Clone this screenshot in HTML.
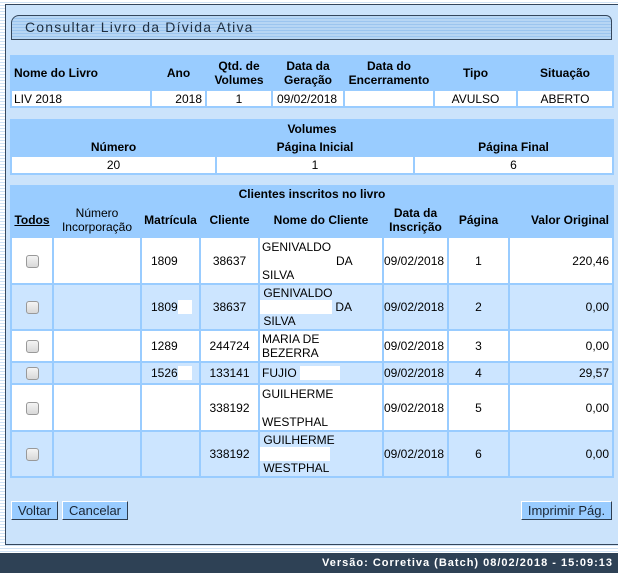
<!DOCTYPE html>
<html><head><meta charset="utf-8"><style>
*{margin:0;padding:0;box-sizing:border-box}
body{width:618px;height:573px;overflow:hidden;position:relative;font-family:"Liberation Sans",Arial,sans-serif;font-size:12px;color:#000;
background:repeating-linear-gradient(to bottom,#fff 0,#fff 2px,#cfe2f5 2px,#cfe2f5 3px)}
#panel{position:absolute;left:5px;top:4px;width:613px;height:541px;background:#cbe3fb;border:1px solid #34465c;border-right:none}
#title{position:absolute;left:11px;top:15px;width:601px;height:25px;border:1px solid #34465c;border-top-left-radius:8px;border-top-right-radius:6px;
background:repeating-linear-gradient(to bottom,#b7d6f4 0,#b7d6f4 2px,#9cc5ef 2px,#9cc5ef 3px);font-size:14px;letter-spacing:1.2px;color:#1f2f40;padding:3px 0 0 13px}
table{position:absolute;border-collapse:separate;border-spacing:2px;table-layout:fixed;background:#99ccff}
td,th{overflow:hidden;white-space:nowrap;padding:0}
th{font-weight:bold;background:#99ccff;text-align:center;line-height:14px}
td{background:#fff;line-height:14px}
.lb td{background:#cce5ff}
.c{text-align:center}.r{text-align:right;padding-right:3px}
.cb{display:inline-block;width:13px;height:13px;border:1px solid #999;border-radius:3px;background:linear-gradient(#f4f4f4,#d8d8d8);vertical-align:middle}
.w{display:inline-block;background:#fff;height:14px;vertical-align:top}
.btn{position:absolute;height:19px;background:#99ccff;border:1px solid;border-color:#fff #2d3d50 #2d3d50 #fff;font-size:13px;text-align:center;line-height:17px;color:#1a2533}
#foot{position:absolute;left:0;top:553px;width:618px;height:20px;background:#2e4155;color:#fff;font-weight:bold;font-size:11px;letter-spacing:1px;text-align:right;padding:4px 5px 0 0}
</style></head><body>
<div id="panel"></div>
<div id="title">Consultar Livro da Dívida Ativa</div>

<table style="left:10px;top:55px;width:604px">
<colgroup><col style="width:138px"><col style="width:53px"><col style="width:64px"><col style="width:70px"><col style="width:88px"><col style="width:81px"><col></colgroup>
<tr style="height:32px"><th style="text-align:left;padding-left:2px">Nome do Livro</th><th>Ano</th><th>Qtd. de<br>Volumes</th><th>Data da<br>Geração</th><th>Data do<br>Encerramento</th><th>Tipo</th><th>Situação</th></tr>
<tr style="height:15px"><td style="padding-left:2px">LIV 2018</td><td class="r">2018</td><td class="c">1</td><td style="padding-left:4px">09/02/2018</td><td></td><td class="c">AVULSO</td><td class="c">ABERTO</td></tr>
</table>

<table style="left:10px;top:119px;width:604px">
<colgroup><col style="width:203px"><col style="width:196px"><col></colgroup>
<tr style="height:16px"><th colspan="3">Volumes</th></tr>
<tr style="height:16px"><th>Número</th><th>Página Inicial</th><th>Página Final</th></tr>
<tr style="height:16px"><td class="c">20</td><td class="c">1</td><td class="c">6</td></tr>
</table>

<table style="left:10px;top:185px;width:604px">
<colgroup><col style="width:40px"><col style="width:86px"><col style="width:57px"><col style="width:57px"><col style="width:122px"><col style="width:63px"><col style="width:59px"><col></colgroup>
<tr style="height:14px"><th colspan="8">Clientes inscritos no livro</th></tr>
<tr style="height:33px"><th><u>Todos</u></th><th style="font-weight:normal">Número<br>Incorporação</th><th>Matrícula</th><th>Cliente</th><th>Nome do Cliente</th><th>Data da<br>Inscrição</th><th>Página</th><th class="r">Valor Original</th></tr>
<tr style="height:45px"><td class="c"><span class="cb"></span></td><td></td><td style="padding-left:9px">1809</td><td class="c">38637</td><td style="padding-left:2px">GENIVALDO<br><span style="padding-left:74px">DA</span><br>SILVA</td><td class="r">09/02/2018</td><td class="c">1</td><td class="r">220,46</td></tr>
<tr class="lb" style="height:44px"><td class="c"><span class="cb"></span></td><td></td><td style="padding-left:9px">1809<span class="w" style="width:14px"></span></td><td class="c">38637</td><td>&nbsp;GENIVALDO<br><span class="w" style="width:72px"></span> DA<br>&nbsp;SILVA</td><td class="r">09/02/2018</td><td class="c">2</td><td class="r">0,00</td></tr>
<tr style="height:30px"><td class="c"><span class="cb"></span></td><td></td><td style="padding-left:9px">1289</td><td class="c">244724</td><td style="padding-left:2px">MARIA DE<br>BEZERRA</td><td class="r">09/02/2018</td><td class="c">3</td><td class="r">0,00</td></tr>
<tr class="lb" style="height:20px"><td class="c"><span class="cb"></span></td><td></td><td style="padding-left:9px">1526<span class="w" style="width:14px"></span></td><td class="c">133141</td><td style="padding-left:2px">FUJIO <span class="w" style="width:40px"></span></td><td class="r">09/02/2018</td><td class="c">4</td><td class="r">29,57</td></tr>
<tr style="height:45px"><td class="c"><span class="cb"></span></td><td></td><td></td><td class="c">338192</td><td style="padding-left:2px">GUILHERME<br><br>WESTPHAL</td><td class="r">09/02/2018</td><td class="c">5</td><td class="r">0,00</td></tr>
<tr class="lb" style="height:44px"><td class="c"><span class="cb"></span></td><td></td><td></td><td class="c">338192</td><td>&nbsp;GUILHERME<br><span class="w" style="width:70px"></span><br>&nbsp;WESTPHAL</td><td class="r">09/02/2018</td><td class="c">6</td><td class="r">0,00</td></tr>
</table>

<div class="btn" style="left:11px;top:501px;width:47px">Voltar</div>
<div class="btn" style="left:62px;top:501px;width:66px">Cancelar</div>
<div class="btn" style="left:521px;top:501px;width:91px">Imprimir Pág.</div>

<div id="foot">Versão: Corretiva (Batch) 08/02/2018 - 15:09:13</div>
</body></html>
